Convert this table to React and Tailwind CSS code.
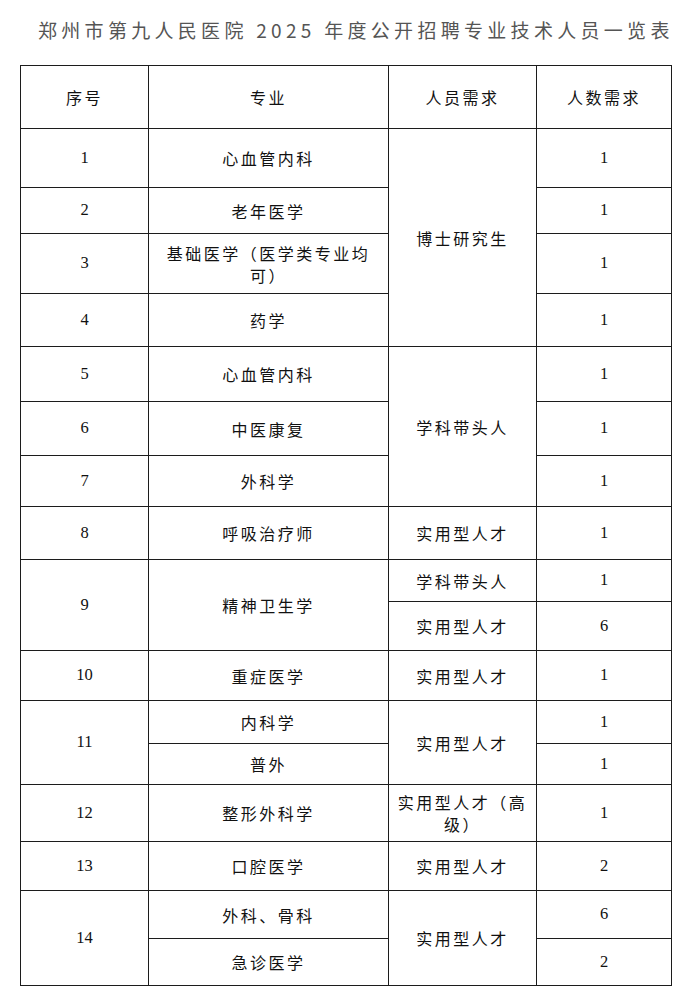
const cjk = { fontFamily: '"Noto Sans CJK SC", sans-serif' };

const Num = ({ children, ...rest }) => (
  <td
    {...rest}
    className="border border-[#1c1c1c] p-0 text-center align-middle text-[16.5px] text-[#111] font-['Liberation_Serif',serif]"
  >
    {children}
  </td>
);

const Txt = ({ children, ...rest }) => (
  <td
    {...rest}
    className="border border-[#1c1c1c] p-0 text-center align-middle text-[16px] leading-[22px] tracking-[2.5px] text-[#111]"
    style={cjk}
  >
    {children}
  </td>
);

export default function App() {
  return (
    <div className="w-[696px] h-[998px] bg-white" style={cjk}>
      <div className="h-[65px] pt-[18px] pl-[38px] whitespace-nowrap text-[19px] leading-[24px] tracking-[4.3px] text-[#555]">
        郑州市第九人民医院 2025 年度公开招聘专业技术人员一览表
      </div>
      <table className="ml-[20px] w-[651px] table-fixed border-collapse">
        <colgroup>
          <col className="w-[128px]" />
          <col className="w-[240px]" />
          <col className="w-[148px]" />
          <col className="w-[135px]" />
        </colgroup>
        <tbody>
          <tr className="h-[63px]">
            <Txt>序号</Txt>
            <Txt>专业</Txt>
            <Txt>人员需求</Txt>
            <Txt>人数需求</Txt>
          </tr>
          <tr className="h-[59px]">
            <Num>1</Num>
            <Txt>心血管内科</Txt>
            <Txt rowSpan={4}>博士研究生</Txt>
            <Num>1</Num>
          </tr>
          <tr className="h-[46px]">
            <Num>2</Num>
            <Txt>老年医学</Txt>
            <Num>1</Num>
          </tr>
          <tr className="h-[60px]">
            <Num>3</Num>
            <Txt>
              基础医学（医学类专业均
              <br />
              可）
            </Txt>
            <Num>1</Num>
          </tr>
          <tr className="h-[53px]">
            <Num>4</Num>
            <Txt>药学</Txt>
            <Num>1</Num>
          </tr>
          <tr className="h-[55px]">
            <Num>5</Num>
            <Txt>心血管内科</Txt>
            <Txt rowSpan={3}>学科带头人</Txt>
            <Num>1</Num>
          </tr>
          <tr className="h-[54px]">
            <Num>6</Num>
            <Txt>中医康复</Txt>
            <Num>1</Num>
          </tr>
          <tr className="h-[51px]">
            <Num>7</Num>
            <Txt>外科学</Txt>
            <Num>1</Num>
          </tr>
          <tr className="h-[53px]">
            <Num>8</Num>
            <Txt>呼吸治疗师</Txt>
            <Txt>实用型人才</Txt>
            <Num>1</Num>
          </tr>
          <tr className="h-[42px]">
            <Num rowSpan={2}>9</Num>
            <Txt rowSpan={2}>精神卫生学</Txt>
            <Txt>学科带头人</Txt>
            <Num>1</Num>
          </tr>
          <tr className="h-[49px]">
            <Txt>实用型人才</Txt>
            <Num>6</Num>
          </tr>
          <tr className="h-[50px]">
            <Num>10</Num>
            <Txt>重症医学</Txt>
            <Txt>实用型人才</Txt>
            <Num>1</Num>
          </tr>
          <tr className="h-[43px]">
            <Num rowSpan={2}>11</Num>
            <Txt>内科学</Txt>
            <Txt rowSpan={2}>实用型人才</Txt>
            <Num>1</Num>
          </tr>
          <tr className="h-[41px]">
            <Txt>普外</Txt>
            <Num>1</Num>
          </tr>
          <tr className="h-[57px]">
            <Num>12</Num>
            <Txt>整形外科学</Txt>
            <Txt>
              实用型人才（高
              <br />
              级）
            </Txt>
            <Num>1</Num>
          </tr>
          <tr className="h-[49px]">
            <Num>13</Num>
            <Txt>口腔医学</Txt>
            <Txt>实用型人才</Txt>
            <Num>2</Num>
          </tr>
          <tr className="h-[48px]">
            <Num rowSpan={2}>14</Num>
            <Txt>外科、骨科</Txt>
            <Txt rowSpan={2}>实用型人才</Txt>
            <Num>6</Num>
          </tr>
          <tr className="h-[47px]">
            <Txt>急诊医学</Txt>
            <Num>2</Num>
          </tr>
        </tbody>
      </table>
    </div>
  );
}
